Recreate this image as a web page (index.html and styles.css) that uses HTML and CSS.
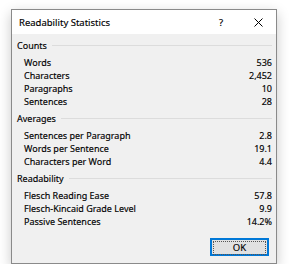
FILE: index.html
```html
<!DOCTYPE html>
<html lang="en">
<head>
  <meta charset="UTF-8" />
  <title>Readability Statistics</title>
  <link rel="stylesheet" href="styles.css">
</head>
<body>
  <div class="dialog">
    <div class="titlebar">
      <span class="title">Readability Statistics</span>
      <span class="help">?</span>
      <svg class="close" width="9" height="9" viewBox="0 0 9 9">
        <path d="M0.5 0.5 L8.5 8.5 M8.5 0.5 L0.5 8.5" stroke="#000" stroke-width="1" fill="none"/>
      </svg>
    </div>
    <div class="content">
      <div class="group">
        <div class="group-head"><span>Counts</span><div class="rule"></div></div>
        <div class="row"><span>Words</span><span>536</span></div>
        <div class="row"><span>Characters</span><span>2,452</span></div>
        <div class="row"><span>Paragraphs</span><span>10</span></div>
        <div class="row"><span>Sentences</span><span>28</span></div>
      </div>
      <div class="group">
        <div class="group-head"><span>Averages</span><div class="rule"></div></div>
        <div class="row"><span>Sentences per Paragraph</span><span>2.8</span></div>
        <div class="row"><span>Words per Sentence</span><span>19.1</span></div>
        <div class="row"><span>Characters per Word</span><span>4.4</span></div>
      </div>
      <div class="group">
        <div class="group-head"><span>Readability</span><div class="rule"></div></div>
        <div class="row"><span>Flesch Reading Ease</span><span>57.8</span></div>
        <div class="row"><span>Flesch-Kincaid Grade Level</span><span>9.9</span></div>
        <div class="row"><span>Passive Sentences</span><span>14.2%</span></div>
      </div>
      <div class="buttons">
        <button class="ok-btn"><span>OK</span></button>
      </div>
    </div>
  </div>
</body>
</html>
```

FILE: styles.css
```css
body {
  margin: 0;
  padding: 0;
  background-color: #fff;
  font-family: "Noto Sans", sans-serif;
  font-size: 9px;
  color: #000;
  -webkit-text-stroke: 0.15px #000;
}
.dialog {
  margin: 9px 0 0 11px;
  width: 264px;
  height: 253px;
  border: 1px solid #8a8a8a;
  background-color: #f0f0f0;
  box-shadow: 0 4px 12px rgba(0,0,0,0.22);
  display: flex;
  flex-direction: column;
}
.titlebar {
  background-color: #fff;
  height: 24px;
  display: flex;
  align-items: center;
  padding: 0 0 0 7px;
  font-size: 9.5px;
}
.title {
  flex: 1;
}
.help {
  margin-right: 31px;
}
.close {
  margin-right: 13px;
}
.content {
  flex: 1;
  padding: 3px 4px 0 5px;
  display: flex;
  flex-direction: column;
}
.group {
  margin-bottom: 2px;
}
.group-head {
  display: flex;
  align-items: center;
  height: 16px;
  margin-bottom: 3px;
}
.rule {
  flex: 1;
  height: 1px;
  background-color: #dcdcdc;
  margin-left: 5px;
}
.row {
  display: flex;
  justify-content: space-between;
  height: 13px;
  line-height: 13px;
  padding-left: 7px;
}
.buttons {
  flex: 1;
  display: flex;
  justify-content: flex-end;
  align-items: flex-end;
  padding: 0 3px 7px 0;
}
.ok-btn {
  width: 59px;
  height: 18px;
  border: 2px solid #0078d7;
  background-color: #e1e1e1;
  padding: 1px;
  font-family: "Noto Sans", sans-serif;
  font-size: 9.5px;
  color: #000;
}
.ok-btn span {
  display: block;
  height: 100%;
  line-height: 11px;
  border: 1px dotted #555;
}
```
